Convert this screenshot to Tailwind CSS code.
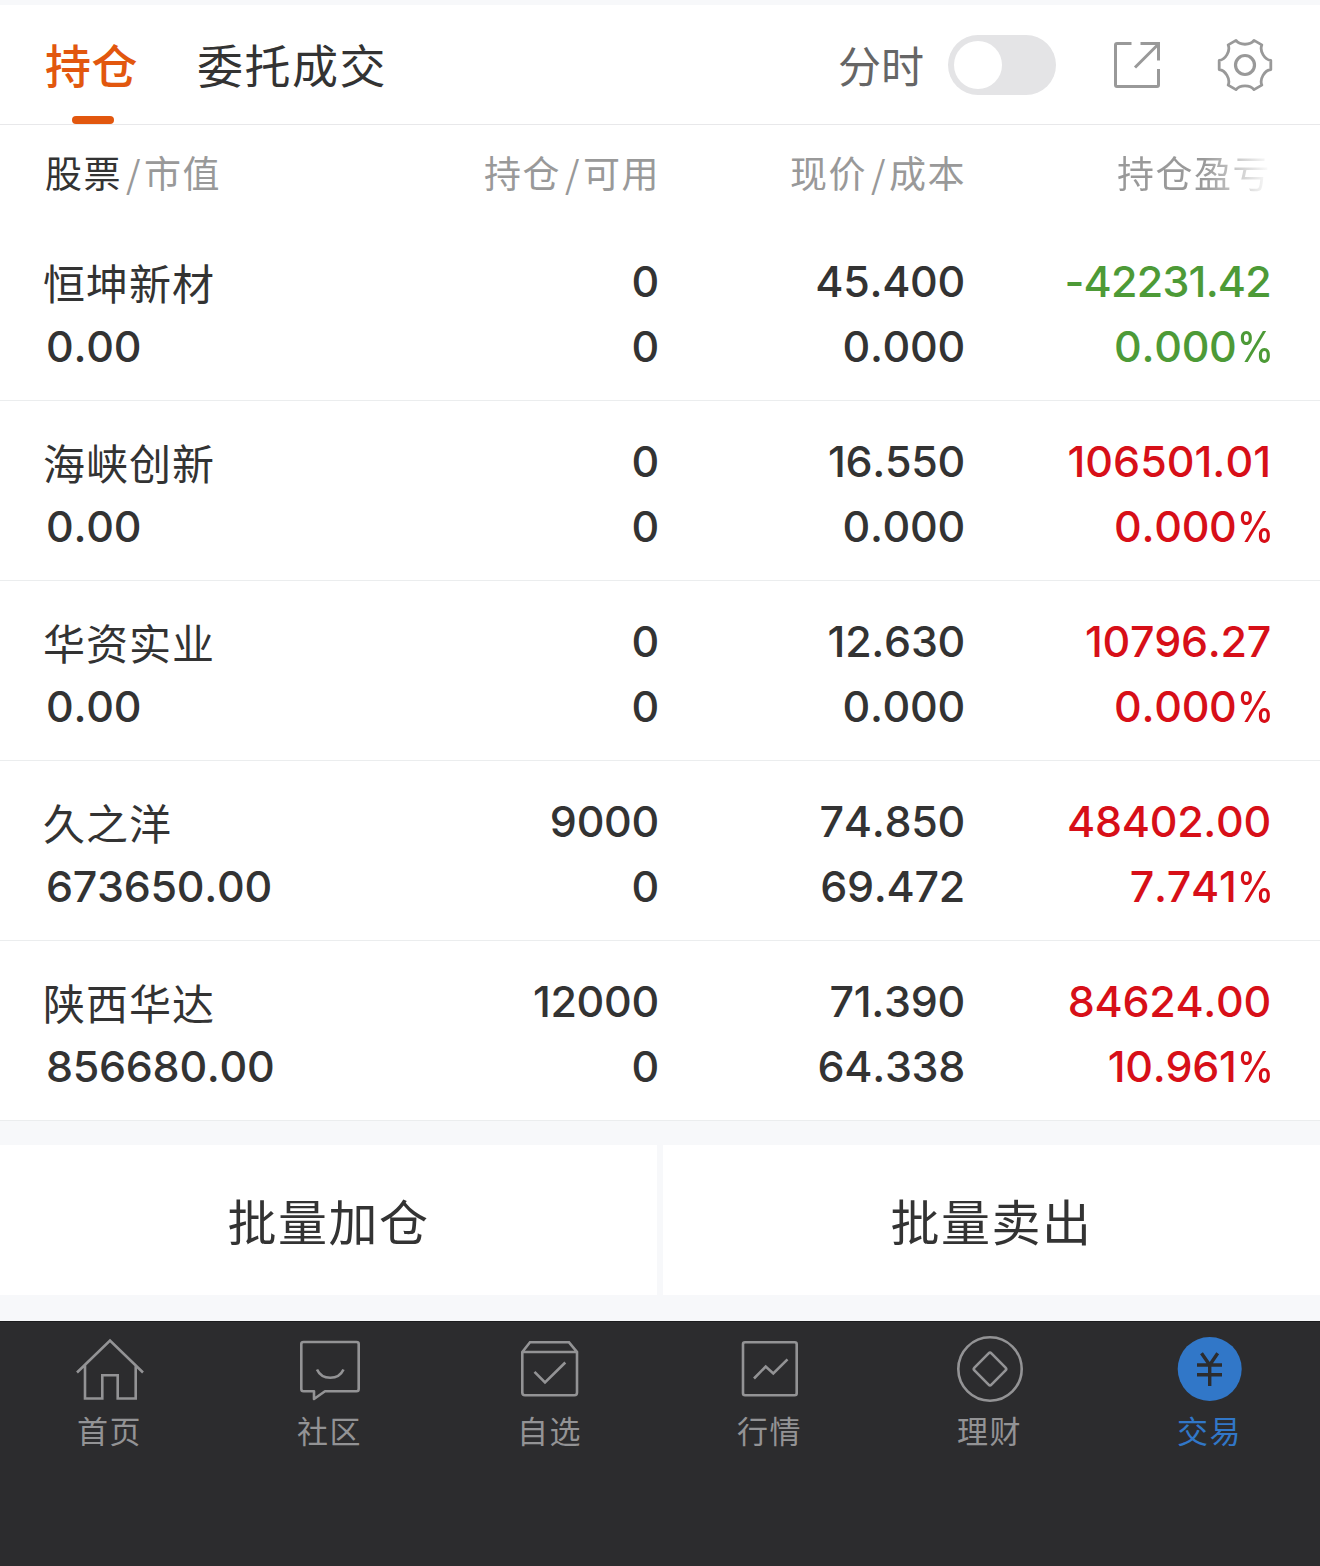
<!DOCTYPE html>
<html lang="zh-CN">

<head>
    <meta charset="UTF-8">
    <meta name="viewport" content="width=device-width, initial-scale=1.0">
    <script src="https://cdn.jsdelivr.net/npm/@tailwindcss/browser@4"></script>
    <title>持仓</title>
</head>

<body class="bg-[#f7f8fa] pt-[5px] text-[#333333] font-['Noto_Sans_CJK_SC',sans-serif]">
    <!-- Tabs -->
    <header class="flex items-center h-[120px] pl-[45px] pr-[47px] bg-white border-b border-[#e8e8ea]">
        <div class="relative flex items-center h-full pb-0.5 text-[46px] tracking-[0.5px] font-medium text-[#e2570e]">
            持仓
            <span class="absolute bottom-0 left-[27px] w-[42px] h-2 rounded-[4px] bg-[#e2570e]"></span>
        </div>
        <div class="ml-[59px] pb-0.5 text-[46px] tracking-[1.5px]">委托成交</div>
        <div class="ml-auto text-[43px] text-[#666666]">分时</div>
        <div class="ml-6 flex items-center w-[108px] h-[60px] pl-1.5 rounded-full bg-[#e4e4e6]">
            <span class="size-12 rounded-full bg-white"></span>
        </div>
        <svg class="ml-[56px] size-[50px]" viewBox="0 0 50 50" fill="none" stroke="#999999" stroke-width="3">
            <path d="M19.500 3.500H5Q3.500 3.500 3.500 5V45Q3.500 46.500 5 46.500H45Q46.500 46.500 46.500 45V29M28.500 3.500H46.500V20.500M46 4.500L23 27.500" />
        </svg>
        <svg class="ml-[55px] size-[56px]" viewBox="-28 -28 56 56" fill="none" stroke="#999999" stroke-width="2.800" stroke-linejoin="round">
            <path d="M-9-24.600C-5-19.500 5-19.500 9-24.600L16.800-20.100C14.400-14.100 19.400-5.400 25.800-4.500V4.500C19.400 5.400 14.400 14.100 16.800 20.100L9 24.600C5 19.500-5 19.500-9 24.600L-16.800 20.100C-14.400 14.100-19.400 5.400-25.800 4.500V-4.500C-19.400-5.400-14.400-14.100-16.800-20.100Z" />
            <circle r="9.500" stroke-width="3.200" />
        </svg>
    </header>

    <!-- Holdings -->
    <main class="bg-white text-[43px] font-medium">
        <div class="grid grid-cols-[309px_306px_306px_305px] items-center h-24 pl-[45px] text-[37px] tracking-[1.5px] font-normal text-[#999999] text-right">
            <div class="text-left"><span class="text-[#333333]">股票</span><span class="ml-1 mr-0.5">/</span>市值</div>
            <div>持仓<span class="ml-1 mr-0.5">/</span>可用</div>
            <div>现价<span class="ml-1 mr-0.5">/</span>成本</div>
            <div class="bg-linear-to-r from-[#999999] from-78% to-white bg-clip-text text-transparent">持仓盈亏</div>
        </div>

        <div class="grid grid-cols-[308px_306px_306px_306px] h-[180px] pt-7 pl-[45px] border-b border-[#ebedee] font-[Inter,sans-serif] leading-[65px] tracking-[-0.3px] [font-kerning:none] text-right">
            <div class="text-left"><p class="-ml-0.5 font-['Noto_Sans_CJK_SC',sans-serif] font-normal text-[42px] tracking-[1px]">恒坤新材</p><p class="pl-px">0.00</p></div>
            <div><p>0</p><p>0</p></div>
            <div><p>45.400</p><p>0.000</p></div>
            <div class="text-[#4d9a37]"><p class="tracking-[-0.8px]">-42231.42</p><p>0.000<span class="inline-block -ml-1.5 -mr-0.5 origin-right scale-x-[0.86]">%</span></p></div>
        </div>
        <div class="grid grid-cols-[308px_306px_306px_306px] h-[180px] pt-7 pl-[45px] border-b border-[#ebedee] font-[Inter,sans-serif] leading-[65px] tracking-[-0.3px] [font-kerning:none] text-right">
            <div class="text-left"><p class="-ml-0.5 font-['Noto_Sans_CJK_SC',sans-serif] font-normal text-[42px] tracking-[1px]">海峡创新</p><p class="pl-px">0.00</p></div>
            <div><p>0</p><p>0</p></div>
            <div><p>16.550</p><p>0.000</p></div>
            <div class="text-[#d70f18]"><p class="tracking-normal">106501.01</p><p>0.000<span class="inline-block -ml-1.5 -mr-0.5 origin-right scale-x-[0.86]">%</span></p></div>
        </div>
        <div class="grid grid-cols-[308px_306px_306px_306px] h-[180px] pt-7 pl-[45px] border-b border-[#ebedee] font-[Inter,sans-serif] leading-[65px] tracking-[-0.3px] [font-kerning:none] text-right">
            <div class="text-left"><p class="-ml-0.5 font-['Noto_Sans_CJK_SC',sans-serif] font-normal text-[42px] tracking-[1px]">华资实业</p><p class="pl-px">0.00</p></div>
            <div><p>0</p><p>0</p></div>
            <div><p>12.630</p><p>0.000</p></div>
            <div class="text-[#d70f18]"><p>10796.27</p><p>0.000<span class="inline-block -ml-1.5 -mr-0.5 origin-right scale-x-[0.86]">%</span></p></div>
        </div>
        <div class="grid grid-cols-[308px_306px_306px_306px] h-[180px] pt-7 pl-[45px] border-b border-[#ebedee] font-[Inter,sans-serif] leading-[65px] tracking-[-0.3px] [font-kerning:none] text-right">
            <div class="text-left"><p class="-ml-0.5 font-['Noto_Sans_CJK_SC',sans-serif] font-normal text-[42px] tracking-[1px]">久之洋</p><p class="pl-px">673650.00</p></div>
            <div><p>9000</p><p>0</p></div>
            <div><p>74.850</p><p>69.472</p></div>
            <div class="text-[#d70f18]"><p>48402.00</p><p>7.741<span class="inline-block -ml-1.5 -mr-0.5 origin-right scale-x-[0.86]">%</span></p></div>
        </div>
        <div class="grid grid-cols-[308px_306px_306px_306px] h-[180px] pt-7 pl-[45px] border-b border-[#ebedee] font-[Inter,sans-serif] leading-[65px] tracking-[-0.3px] [font-kerning:none] text-right">
            <div class="text-left"><p class="-ml-0.5 font-['Noto_Sans_CJK_SC',sans-serif] font-normal text-[42px] tracking-[1px]">陕西华达</p><p class="pl-px">856680.00</p></div>
            <div><p>12000</p><p>0</p></div>
            <div><p>71.390</p><p>64.338</p></div>
            <div class="text-[#d70f18]"><p>84624.00</p><p>10.961<span class="inline-block -ml-1.5 -mr-0.5 origin-right scale-x-[0.86]">%</span></p></div>
        </div>
    </main>

    <!-- Batch actions -->
    <div class="grid grid-cols-2 gap-1.5 mt-6 mb-[26px] text-[49px] tracking-[1.5px]">
        <button class="h-[150px] bg-white">批量加仓</button>
        <button class="h-[150px] bg-white">批量卖出</button>
    </div>

    <!-- Bottom navigation -->
    <nav class="grid grid-cols-6 h-[245px] pt-3 bg-[#2c2c2e] border-t border-[#1c1c1e] text-[31px] leading-[52px] tracking-[1.5px] text-[#939395]">
        <a class="flex flex-col items-center">
            <svg class="size-[70px]" viewBox="0 0 70 70" fill="none" stroke="currentColor" stroke-width="2.600">
                <path d="M2 38.500L35 6.500L68 38.500M10 31.500V64.500H27.300V41.300H42.700V64.500H60.700V31.500" />
            </svg>
            <span class="-ml-px">首页</span>
        </a>
        <a class="flex flex-col items-center">
            <svg class="size-[70px]" viewBox="0 0 70 70" fill="none" stroke="currentColor" stroke-width="2.600" stroke-linejoin="round">
                <path d="M8.500 8H61.500Q63.700 8 63.700 10V55Q63.700 57.300 61.500 57.300H30L19 65V57.300H8.500Q6.300 57.300 6.300 55V10Q6.300 8 8.500 8Z" />
                <path d="M22 35.500C27 46.500 43.500 46.500 48.500 35.500" />
            </svg>
            <span class="-ml-px">社区</span>
        </a>
        <a class="flex flex-col items-center">
            <svg class="size-[70px]" viewBox="0 0 70 70" fill="none" stroke="currentColor" stroke-width="2.600">
                <path d="M7.300 18L15 8.300H54L62 18V58.500Q62 61.300 59.500 61.300H10Q7.300 61.300 7.300 58.500ZM7.300 18H62M19.500 37.800L30 48.500L50.300 28.500" />
            </svg>
            <span class="-ml-px">自选</span>
        </a>
        <a class="flex flex-col items-center">
            <svg class="size-[70px]" viewBox="0 0 70 70" fill="none" stroke="currentColor" stroke-width="2.600">
                <rect x="8" y="8.300" width="53.700" height="53" rx="2" />
                <path d="M19 44.500L30.700 32.500L38.300 39.500L52.500 25.300" />
            </svg>
            <span class="-ml-px">行情</span>
        </a>
        <a class="flex flex-col items-center">
            <svg class="size-[70px]" viewBox="0 0 70 70" fill="none" stroke="currentColor" stroke-width="2.600">
                <circle cx="35" cy="35" r="31.700" />
                <rect x="23" y="23" width="24" height="24" rx="2" transform="rotate(45 35 35)" />
            </svg>
            <span class="-ml-px">理财</span>
        </a>
        <a class="flex flex-col items-center text-[#3177c8]">
            <svg class="size-[70px]" viewBox="0 0 70 70" fill="none">
                <circle cx="34.700" cy="35" r="32" fill="currentColor" />
                <path d="M26.500 19.300L34.700 31L42.700 19.300M22 31H47M22 40.700H47M34.700 31V52" stroke="#2c2c2e" stroke-width="3.400" />
            </svg>
            <span class="-ml-px">交易</span>
        </a>
    </nav>
</body>

</html>
